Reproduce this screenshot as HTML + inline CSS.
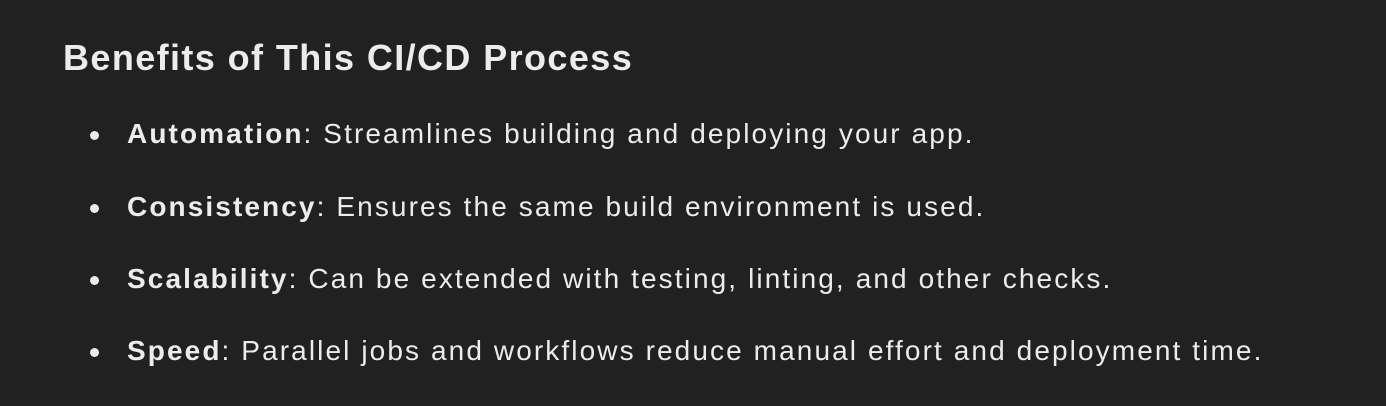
<!DOCTYPE html>
<html><head><style>
body{margin:0;background:#212121;width:1386px;height:406px;overflow:hidden;font-family:"Liberation Sans",sans-serif;color:#ececec;position:relative}
h2{position:absolute;left:63px;margin:0;font-size:36px;font-weight:bold;line-height:1;top:40px;letter-spacing:1.4px}
.li{position:absolute;left:127px;font-size:28px;line-height:1;white-space:nowrap;letter-spacing:2.1px}
.li b{font-weight:bold}
.li:before{content:"";position:absolute;left:-37px;top:11px;width:9px;height:9px;border-radius:50%;background:#ececec}
</style></head><body>
<h2>Benefits of This CI/CD Process</h2>
<div class="li" style="top:120px"><b>Automation</b>: Streamlines building and deploying your app.</div>
<div class="li" style="top:193px"><b>Consistency</b>: Ensures the same build environment is used.</div>
<div class="li" style="top:265px"><b>Scalability</b>: Can be extended with testing, linting, and other checks.</div>
<div class="li" style="top:337px"><b>Speed</b>: Parallel jobs and workflows reduce manual effort and deployment time.</div>
</body></html>
